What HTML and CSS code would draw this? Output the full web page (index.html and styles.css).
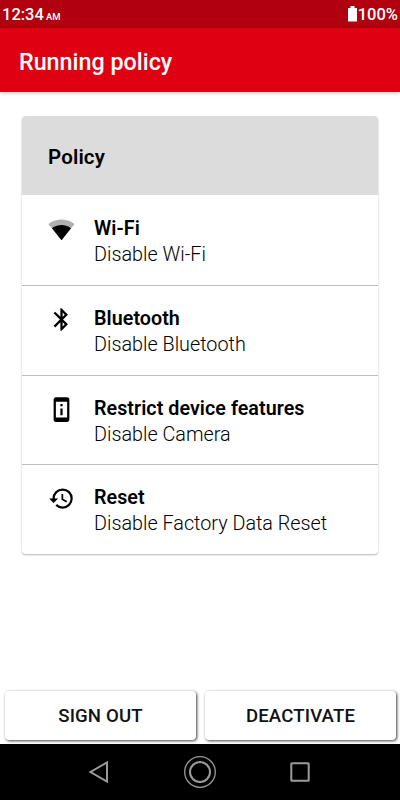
FILE: index.html
```html
<!DOCTYPE html>
<html lang="en">
  <head>
    <meta charset="UTF-8">
    <meta name="viewport" content="width=device-width, initial-scale=1.0">
    <title>Running policy</title>
    <link rel="stylesheet" href="styles.css">
  </head>
  <body>
    <div class="status-bar">
      <div class="clock">12:34<span class="ampm">AM</span></div>
      <div class="battery">
        <svg width="9" height="16" viewBox="0 0 9 16"><path d="M2.5 0h4v2H9v13.5H0V2h2.5z" fill="#fff"/></svg>
        <span>100%</span>
      </div>
    </div>

    <header class="app-bar">
      <h1>Running policy</h1>
    </header>

    <main class="content">
      <section class="card">
        <h2 class="card-title">Policy</h2>
        <ul class="policy-list">
          <li class="policy">
            <svg class="icon" viewBox="0 0 24 24">
              <path fill="#b0b0b0" d="M23.64 7c-.45-.34-4.93-4-11.64-4C5.28 3 .81 6.66.36 7L12 21.5z"/>
              <path d="M3.53 10.95L12 21.5l8.47-10.55C20.04 10.62 16.81 8 12 8s-8.04 2.62-8.47 2.95z"/>
            </svg>
            <div>
              <h3>Wi-Fi</h3>
              <p>Disable Wi-Fi</p>
            </div>
          </li>
          <li class="policy">
            <svg class="icon" viewBox="0 0 24 24">
              <path d="M17.71 7.71L12 2h-1v7.59L6.41 5 5 6.41 10.59 12 5 17.59 6.41 19 11 14.41V22h1l5.71-5.71-4.3-4.29 4.3-4.29zM13 5.83l1.88 1.88L13 9.59V5.83zm1.88 10.46L13 18.17v-3.76l1.88 1.88z"/>
            </svg>
            <div>
              <h3>Bluetooth</h3>
              <p>Disable Bluetooth</p>
            </div>
          </li>
          <li class="policy">
            <svg class="icon" viewBox="0 0 24 24">
              <path d="M13 7h-2v2h2V7zm0 4h-2v6h2v-6zm4-9.99L7 1c-1.1 0-2 .9-2 2v18c0 1.1.9 2 2 2h10c1.1 0 2-.9 2-2V3c0-1.1-.9-1.99-2-1.99zM17 19H7V5h10v14z"/>
            </svg>
            <div>
              <h3>Restrict device features</h3>
              <p>Disable Camera</p>
            </div>
          </li>
          <li class="policy">
            <svg class="icon" viewBox="0 0 24 24">
              <path d="M13 3a9 9 0 0 0-9 9H1l3.89 3.89.07.14L9 12H6c0-3.87 3.13-7 7-7s7 3.13 7 7-3.13 7-7 7c-1.93 0-3.68-.79-4.94-2.06l-1.42 1.42A8.954 8.954 0 0 0 13 21a9 9 0 0 0 0-18zm-1 5v5l4.28 2.54.72-1.21-3.5-2.08V8H12z"/>
            </svg>
            <div>
              <h3>Reset</h3>
              <p>Disable Factory Data Reset</p>
            </div>
          </li>
        </ul>
      </section>
    </main>

    <div class="actions">
      <button type="button">SIGN OUT</button>
      <button type="button">DEACTIVATE</button>
    </div>

    <nav class="nav-bar">
      <svg width="34" height="34" viewBox="0 0 34 34"><path d="M24 7.5v19L7.5 17z"/></svg>
      <svg width="34" height="34" viewBox="0 0 34 34"><circle class="thin" cx="17" cy="17" r="15.3"/><circle cx="17" cy="17" r="10"/></svg>
      <svg width="34" height="34" viewBox="0 0 34 34"><rect x="8.3" y="8.3" width="17.4" height="17.4" rx="0.5"/></svg>
    </nav>
  </body>
</html>
```
FILE: styles.css
```css
* {
  box-sizing: border-box;
  margin: 0;
  padding: 0;
}

body {
  display: flex;
  flex-direction: column;
  height: 800px;
  font-family: Roboto, sans-serif;
  background-color: #fff;
  color: #000;
  overflow: hidden;
}

.status-bar {
  display: flex;
  justify-content: space-between;
  align-items: center;
  height: 28px;
  padding: 1px 2px 0;
  background-color: #b1000e;
  color: #fff;
  font-size: 16.5px;
  font-weight: 500;
}

.ampm {
  margin-left: 2px;
  font-size: 9.5px;
  font-weight: 500;
}

.battery {
  display: flex;
  align-items: center;
  gap: 1px;
}

.battery svg {
  margin-top: -1px;
}

.app-bar {
  display: flex;
  align-items: center;
  height: 64px;
  padding: 3px 19px 0;
  background-color: #df0011;
  color: #fff;
  box-shadow: 0 1px 4px rgba(0, 0, 0, 0.25);
}

.app-bar h1 {
  font-size: 23.3px;
  font-weight: 500;
}

.content {
  flex: 1;
  padding: 24px 22px;
}

.card {
  border-radius: 4px;
  box-shadow: 0 1px 2px rgba(0, 0, 0, 0.3);
  overflow: hidden;
}

.card-title {
  height: 79px;
  padding: 3px 26px 0;
  background-color: #dcdcdc;
  font-size: 20.5px;
  font-weight: 600;
  letter-spacing: 0.15px;
  line-height: 76px;
}

.policy-list {
  list-style: none;
}

.policy {
  display: flex;
  gap: 19px;
  height: 90px;
  padding: 20px 26px 0;
  border-bottom: 1px solid #bdbdbd;
}

.policy:first-child {
  height: 91px;
  padding-top: 21px;
}

.policy:nth-child(3) {
  height: 89px;
}

.policy:last-child {
  height: 89px;
  border-bottom: none;
}

.icon {
  width: 27px;
  height: 27px;
}

.policy h3 {
  font-size: 19.7px;
  font-weight: 600;
  letter-spacing: 0.05px;
  line-height: 26px;
}

.policy p {
  font-size: 19.8px;
  font-weight: 350;
  line-height: 26px;
}

.actions {
  display: flex;
  gap: 9px;
  padding: 0 4px 4px 5px;
}

.actions button {
  flex: 1;
  height: 49px;
  border: none;
  border-radius: 4px;
  background-color: #fff;
  box-shadow: 1px 1px 3px rgba(0, 0, 0, 0.75);
  color: #111;
  font-family: inherit;
  font-size: 18.6px;
  font-weight: 500;
  letter-spacing: 0.15px;
}

.nav-bar {
  display: flex;
  justify-content: center;
  align-items: center;
  gap: 66px;
  height: 56px;
  background-color: #000;
}

.nav-bar svg {
  fill: none;
  stroke: #9b9b9b;
  stroke-width: 2;
}

.nav-bar .thin {
  stroke-width: 1.3;
}
```
